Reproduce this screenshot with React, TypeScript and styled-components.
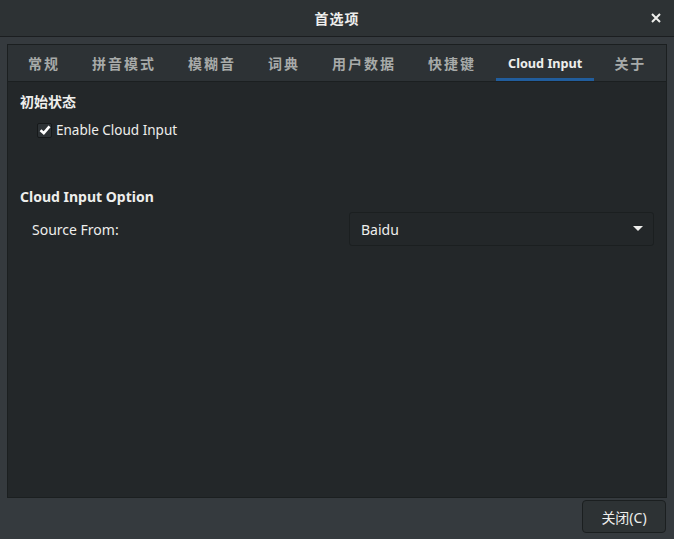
import React, { useState } from "react";
import styled, { createGlobalStyle } from "styled-components";

const GlobalStyle = createGlobalStyle`
  html, body {
    margin: 0;
    padding: 0;
    background: #353a3e;
  }
  body {
    font-family: "Noto Sans", "Noto Sans CJK SC", sans-serif;
    font-size: 14px;
    color: #eeeeec;
  }
`;

const Window = styled.div`
  width: 674px;
  height: 539px;
  display: flex;
  flex-direction: column;
  background: #353a3e;
  overflow: hidden;
`;

const TitleBar = styled.div`
  height: 36px;
  flex-shrink: 0;
  display: flex;
  align-items: center;
  justify-content: center;
  position: relative;
  background: #2d3234;
  border-bottom: 1px solid #1b1e20;
  font-weight: 700;
  font-size: 14px;
  letter-spacing: 1px;
`;

const CloseX = styled.button`
  position: absolute;
  right: 10px;
  top: 10px;
  width: 16px;
  height: 16px;
  padding: 0;
  border: none;
  background: transparent;
  display: flex;
  align-items: center;
  justify-content: center;
  cursor: pointer;
`;

const Body = styled.div`
  flex: 1;
  display: flex;
  flex-direction: column;
  padding: 7px 7px 0 7px;
`;

const Notebook = styled.div`
  height: 452px;
  display: flex;
  flex-direction: column;
  border: 1px solid #1b1f20;
  background: #232729;
`;

const TabStrip = styled.div`
  height: 36px;
  display: flex;
  padding-left: 4px;
  background: #2d3235;
  border-bottom: 1px solid #1b1f20;
`;

const Tab = styled.div<{ $active?: boolean; $latin?: boolean }>`
  margin: 0 4px;
  padding: 0 12px;
  display: flex;
  align-items: center;
  font-weight: 700;
  font-size: ${(p) => (p.$latin ? 12.7 : 14)}px;
  letter-spacing: ${(p) => (p.$latin ? 0 : 2)}px;
  color: ${(p) => (p.$active ? "#eeeeec" : "#a7aaa9")};
  box-shadow: ${(p) => (p.$active ? "inset 0 -3px 0 #215d9c" : "none")};
  cursor: pointer;
`;

const Page = styled.div`
  flex: 1;
  padding: 10px 12px;
`;

const Section = styled.div<{ $gap?: number }>`
  margin-bottom: ${(p) => p.$gap ?? 0}px;
`;

const Heading = styled.div`
  font-weight: 700;
  font-size: 14px;
  line-height: 20px;
`;

const CheckRow = styled.label`
  display: flex;
  align-items: center;
  gap: 4px;
  margin-top: 8px;
  padding-left: 17px;
  line-height: 20px;
  font-size: 13.5px;
  cursor: pointer;
`;

const Box = styled.span`
  width: 13px;
  height: 13px;
  border-radius: 2px;
  background: #2d3235;
  border: 1px solid #16191a;
  display: flex;
  align-items: center;
  justify-content: center;
`;

const OptionRow = styled.div`
  display: flex;
  align-items: center;
  margin-top: 5px;
  padding-left: 12px;
`;

const OptionLabel = styled.div`
  flex: 1;
`;

const Combo = styled.div`
  width: 305px;
  height: 34px;
  box-sizing: border-box;
  display: flex;
  align-items: center;
  justify-content: space-between;
  padding: 0 10px 0 11px;
  border: 1px solid #1b1f20;
  border-radius: 3px;
  background: #232729;
`;

const Footer = styled.div`
  flex: 1;
  display: flex;
  justify-content: flex-end;
  align-items: flex-start;
  padding: 2px 1px 0 0;
`;

const Button = styled.button`
  width: 84px;
  height: 33px;
  border: 1px solid #1b1f20;
  border-radius: 4px;
  background: #2d3234;
  color: #eeeeec;
  font-family: "Noto Sans", "Noto Sans CJK SC", sans-serif;
  font-size: 14px;
  cursor: pointer;
`;

const tabs = ["常规", "拼音模式", "模糊音", "词典", "用户数据", "快捷键", "Cloud Input", "关于"];

export default function App() {
  const [active, setActive] = useState(6);
  const [enabled, setEnabled] = useState(true);

  return (
    <>
      <GlobalStyle />
      <Window>
        <TitleBar>
          首选项
          <CloseX type="button">
            <svg width="10" height="10" viewBox="0 0 10 10">
              <path d="M1 1 L9 9 M9 1 L1 9" stroke="#eeeeec" strokeWidth="2" />
            </svg>
          </CloseX>
        </TitleBar>
        <Body>
          <Notebook>
            <TabStrip>
              {tabs.map((t, i) => (
                <Tab
                  key={t}
                  $active={i === active}
                  $latin={/^[A-Za-z]/.test(t)}
                  onClick={() => setActive(i)}
                >
                  {t}
                </Tab>
              ))}
            </TabStrip>
            <Page>
              <Section $gap={47}>
                <Heading>初始状态</Heading>
                <CheckRow onClick={() => setEnabled(!enabled)}>
                  <Box>
                    {enabled && (
                      <svg width="12" height="12" viewBox="0 0 12 12">
                        <path d="M1.5 6.2 L4.8 9.2 L10.5 2.3" fill="none" stroke="#ffffff" strokeWidth="2.6" />
                      </svg>
                    )}
                  </Box>
                  Enable Cloud Input
                </CheckRow>
              </Section>
              <Section>
                <Heading>Cloud Input Option</Heading>
                <OptionRow>
                  <OptionLabel>Source From:</OptionLabel>
                  <Combo>
                    Baidu
                    <svg width="10" height="6" viewBox="0 0 10 6">
                      <path d="M0 0 H10 L5 5 Z" fill="#eeeeec" />
                    </svg>
                  </Combo>
                </OptionRow>
              </Section>
            </Page>
          </Notebook>
          <Footer>
            <Button type="button">关闭(C)</Button>
          </Footer>
        </Body>
      </Window>
    </>
  );
}
